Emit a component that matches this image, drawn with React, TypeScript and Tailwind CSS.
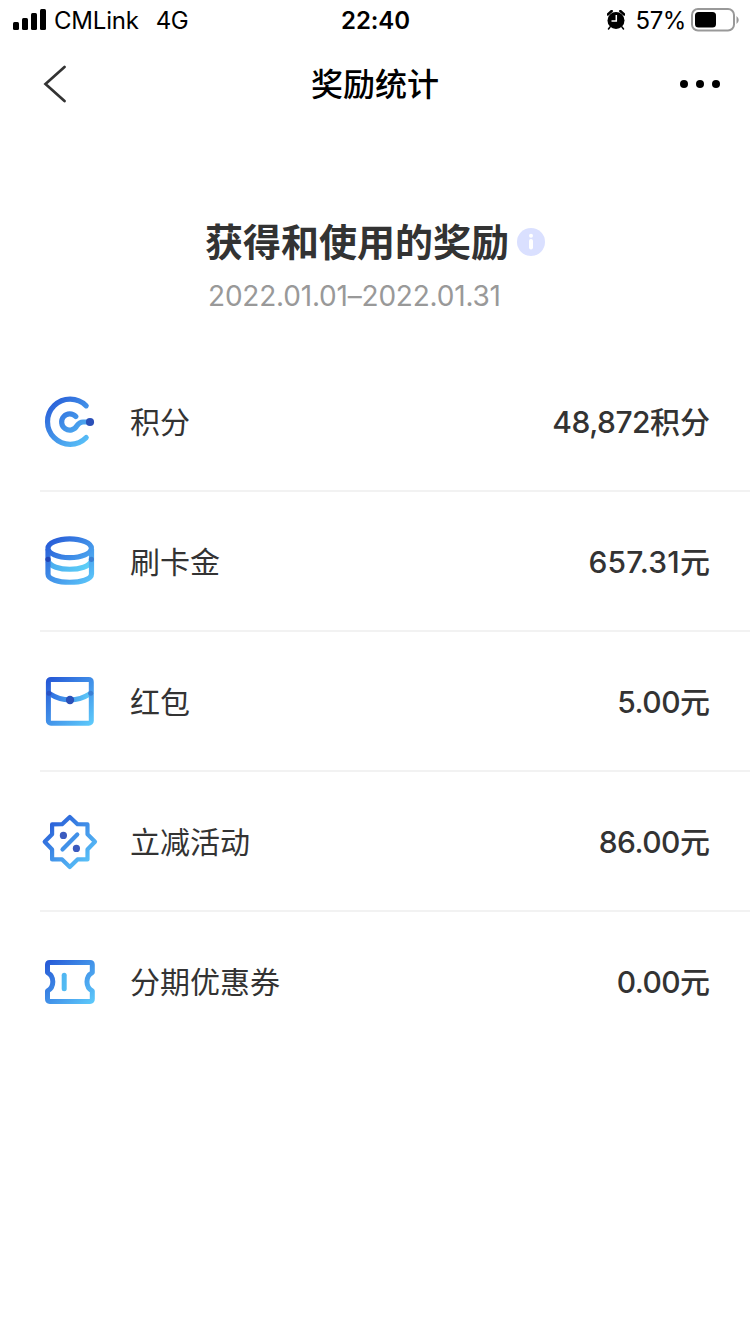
import type { ReactNode } from "react";

const PointsIcon = () => (
  <svg className="size-15" viewBox="0 0 60 60" fill="none" strokeWidth="5.2" strokeLinecap="round">
    <path d="M46.2 14.8A22.6 22.6 0 1 0 46.2 46.6" stroke="url(#blue)" />
    <path d="M35.8 25.6A8.1 8.1 0 1 0 36.9 34.8C38.8 32 40 31 43 31H49" stroke="url(#blue)" />
    <circle cx="50" cy="31" r="4.1" fill="#2b50b8" />
  </svg>
);

const CoinsIcon = () => (
  <svg className="size-15" viewBox="0 0 60 60" fill="none" strokeWidth="5.2">
    <path d="M8 30C12 41 47.5 41 51.5 30" stroke="url(#cyan)" />
    <path d="M8 18V43C8 54 51.5 54 51.5 43V18" stroke="url(#blue)" />
    <ellipse cx="29.7" cy="17.3" rx="21.7" ry="9.4" stroke="url(#blue)" />
    <circle cx="8" cy="28.3" r="2.6" fill="#2345b5" />
    <circle cx="51.4" cy="28.3" r="2.6" fill="#3b7fd3" />
  </svg>
);

const PacketIcon = () => (
  <svg className="size-15" viewBox="0 0 60 60" fill="none" strokeWidth="5">
    <path d="M9 22.3Q30 35.5 50.7 22.3" stroke="url(#cyan2)" />
    <rect x="8.4" y="8.4" width="42.9" height="43.9" rx="2.5" stroke="url(#blue)" />
    <circle cx="9" cy="22.3" r="2.5" fill="#2952c4" />
    <circle cx="50.7" cy="22.3" r="2.5" fill="#3b7fd3" />
    <circle cx="30" cy="29" r="4.2" fill="#2b50b8" />
  </svg>
);

const DiscountIcon = () => (
  <svg className="size-15" viewBox="0 0 60 60" fill="none" strokeWidth="4.2" strokeLinecap="round" strokeLinejoin="round">
    <path
      d="M29.8 6L37.5 13.2L47.5 13.4V23.2L55 30.8L47.5 38.5V48.4H37.5L29.8 56L22.1 48.4H12.1V38.5L4.7 30.8L12.1 23.2V13.4L22.1 13.2Z"
      stroke="url(#blue)"
    />
    <path d="M22.5 38.5L37.3 23.5" stroke="url(#blue)" />
    <circle cx="23.4" cy="24.4" r="3.6" fill="#3b5bbf" />
    <circle cx="36.4" cy="37.4" r="3.6" fill="#3b5bbf" />
  </svg>
);

const CouponIcon = () => (
  <svg className="size-15" viewBox="0 0 60 60" fill="none" strokeWidth="5" strokeLinejoin="round">
    <path
      d="M9.8 11.4H50Q52.3 11.4 52.3 13.7V21.6C45.2 25.4 45.2 36.2 52.3 40V48.1Q52.3 50.4 50 50.4H9.8Q7.5 50.4 7.5 48.1V40C14.6 36.2 14.6 25.4 7.5 21.6V13.7Q7.5 11.4 9.8 11.4Z"
      stroke="url(#blue)"
    />
    <path d="M24.2 24.3V37.7" stroke="url(#cyan)" strokeLinecap="round" />
  </svg>
);

const rewards: { icon: ReactNode; label: string; amount: string; unit: string; tracking: string }[] = [
  { icon: <PointsIcon />, label: "积分", amount: "48,872", unit: "积分", tracking: "tracking-[-0.5px]" },
  { icon: <CoinsIcon />, label: "刷卡金", amount: "657.31", unit: "元", tracking: "tracking-[0.2px]" },
  { icon: <PacketIcon />, label: "红包", amount: "5.00", unit: "元", tracking: "tracking-[-0.5px]" },
  { icon: <DiscountIcon />, label: "立减活动", amount: "86.00", unit: "元", tracking: "tracking-[-0.5px]" },
  { icon: <CouponIcon />, label: "分期优惠券", amount: "0.00", unit: "元", tracking: "tracking-[-0.6px]" },
];

function Gradients() {
  return (
    <svg className="absolute size-0">
      <defs>
        <linearGradient id="blue" gradientUnits="userSpaceOnUse" x1="8" y1="8" x2="50" y2="54">
          <stop offset="0" stopColor="#2658d6" />
          <stop offset="1" stopColor="#5cc8fa" />
        </linearGradient>
        <linearGradient id="cyan" gradientUnits="userSpaceOnUse" x1="8" y1="24" x2="50" y2="40">
          <stop offset="0" stopColor="#48a8ee" />
          <stop offset="1" stopColor="#5fd2f8" />
        </linearGradient>
        <linearGradient id="cyan2" gradientUnits="userSpaceOnUse" x1="8" y1="24" x2="50" y2="30">
          <stop offset="0" stopColor="#2d6ae0" />
          <stop offset="1" stopColor="#5fccf8" />
        </linearGradient>
      </defs>
    </svg>
  );
}

function StatusBar() {
  return (
    <div className="grid h-10 grid-cols-3 items-center pl-[12px] pr-[11px] text-2xl text-black">
      <div className="flex items-center">
        <svg className="ml-px h-[22px] w-[34px]" viewBox="0 0 34 22">
          <rect x="0" y="13" width="6" height="8" rx="1.5" />
          <rect x="9" y="9" width="6" height="12" rx="1.5" />
          <rect x="18" y="4" width="6" height="17" rx="1.5" />
          <rect x="27" y="0" width="6" height="21" rx="1.5" />
        </svg>
        <span className="ml-[7px] pt-0.5 tracking-[-0.2px]">CMLink</span>
        <span className="ml-[17px] pt-0.5 tracking-[-0.5px]">4G</span>
      </div>
      <span className="pt-0.5 text-center font-semibold tracking-[-0.1px]">22:40</span>
      <div className="flex items-center justify-end">
        <svg className="mr-2.5 h-5 w-[18px]" viewBox="0 0 18 20">
          <circle cx="9" cy="10.5" r="8.5" />
          <path d="M0.7 4.5L4.7 1M17.3 4.5L13.3 1" stroke="black" strokeWidth="2.5" strokeLinecap="round" />
          <path d="M3 17L1.5 19M15 17L16.5 19" stroke="black" strokeWidth="1.5" strokeLinecap="round" />
          <path d="M9.3 5V11H4.5" stroke="white" strokeWidth="1.5" fill="none" />
        </svg>
        <span className="pt-0.5 tracking-[-0.4px]">57%</span>
        <svg className="ml-[5px] h-6 w-12" viewBox="0 0 48 24">
          <rect x="1" y="1" width="42" height="21.5" rx="6" fill="none" stroke="#999" strokeWidth="2" />
          <rect x="4" y="4" width="21" height="15.5" rx="3.5" />
          <path d="M45.5 8Q50 12 45.5 16Z" fill="#999" />
        </svg>
      </div>
    </div>
  );
}

export default function App() {
  return (
    <div className="h-[1334px] w-[750px] overflow-hidden bg-white font-['Inter','Noto_Sans_CJK_SC',sans-serif] text-[#333]">
      <Gradients />
      <StatusBar />

      <header className="grid h-22 grid-cols-3 items-center px-[30px]">
        <svg className="ml-[13px] h-[38px] w-[23px]" viewBox="0 0 23 38" fill="none" stroke="#333" strokeWidth="2.7" strokeLinecap="round">
          <path d="M21.5 2L2.5 19L21.5 36" />
        </svg>
        <h1 className="pt-0.5 text-center text-[32px] leading-none font-medium text-black">奖励统计</h1>
        <div className="flex justify-end gap-2">
          <span className="size-2 rounded-full bg-black" />
          <span className="size-2 rounded-full bg-black" />
          <span className="size-2 rounded-full bg-black" />
        </div>
      </header>

      <section className="h-[224px] pt-[91px]">
        <div className="flex items-center justify-center gap-2">
          <h2 className="text-[38px] leading-[46px] font-bold">获得和使用的奖励</h2>
          <svg className="size-7" viewBox="0 0 28 28">
            <circle cx="14" cy="14" r="14" fill="#dae0ff" />
            <circle cx="14" cy="7.8" r="2" fill="white" />
            <path d="M14 13V19.5" stroke="white" strokeWidth="4" strokeLinecap="round" />
          </svg>
        </div>
        <p className="ml-52 mt-[13px] text-[28px] leading-9 tracking-[-0.2px] text-[#999]">2022.01.01–2022.01.31</p>
      </section>

      <ul className="pl-10">
        {rewards.map((item) => (
          <li key={item.label} className="flex h-35 items-center border-b-2 border-[#f2f2f2] pr-10 text-[30px] last:border-transparent">
            {item.icon}
            <span className="ml-[30px] pt-0.5">{item.label}</span>
            <span className="ml-auto pt-0.5 font-medium">
              <span className={item.tracking}>{item.amount}</span>
              {item.unit}
            </span>
          </li>
        ))}
      </ul>
    </div>
  );
}
